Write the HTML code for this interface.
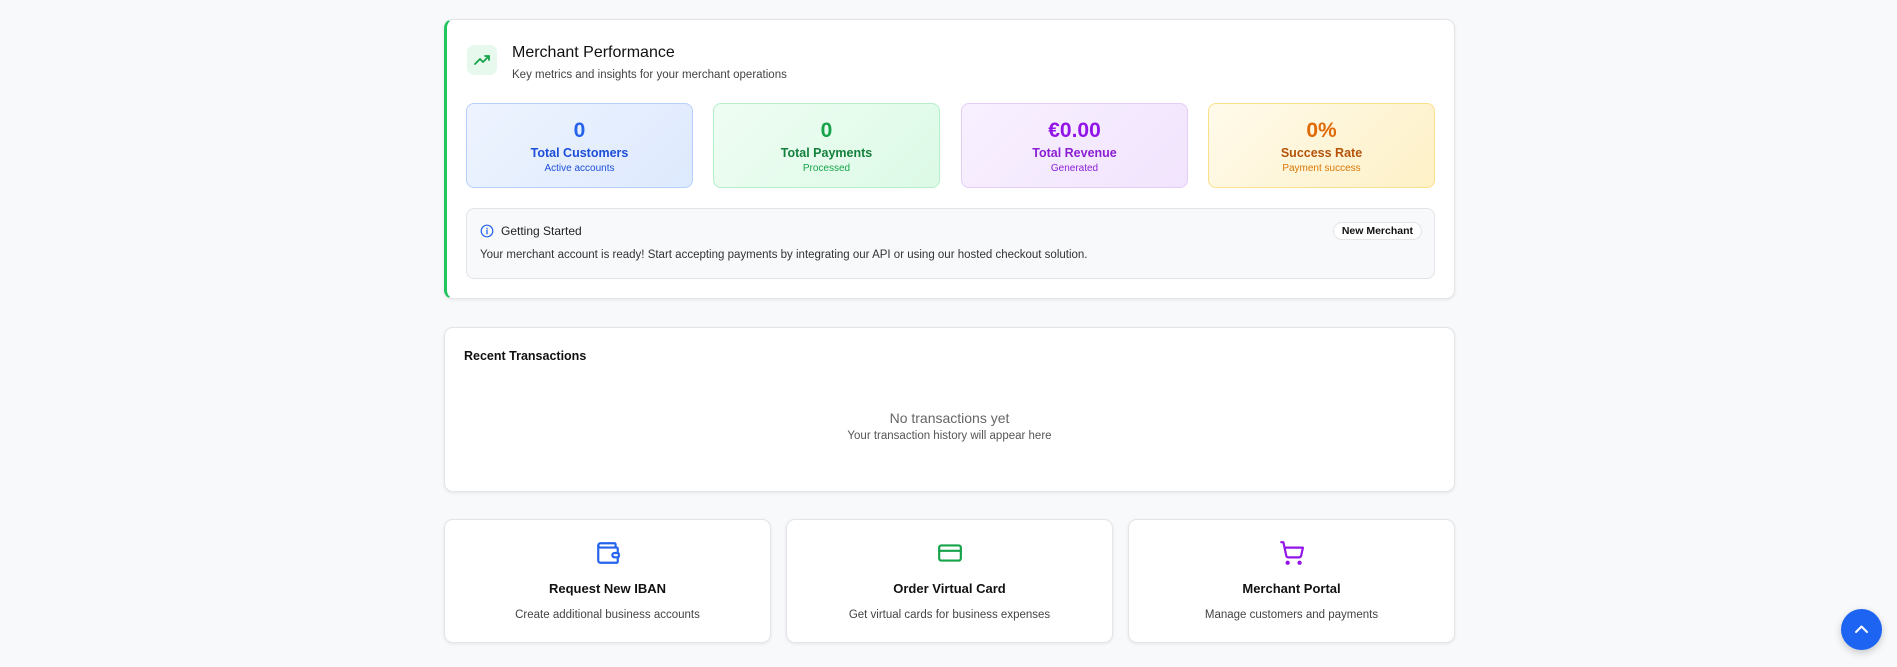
<!DOCTYPE html>
<html><head><style>
*{box-sizing:border-box;margin:0;padding:0}
body{width:1897px;height:667px;background:#f8f9fb;font-family:"Liberation Sans",sans-serif;position:relative;overflow:hidden;color:#111}
.card{position:absolute;background:#fff;border:1px solid #e3e5e8;border-radius:9px;box-shadow:0 1px 3px rgba(0,0,0,.08)}
.m{position:absolute;top:103px;width:227px;height:85px;border-radius:8px;text-align:center;border:1px solid}
.m .v{font-size:21px;font-weight:bold;margin-top:15px}
.m .l{font-size:12.5px;margin-top:3px;font-weight:600}
.m .s{font-size:10px;margin-top:3px}
.b{position:absolute;top:519px;width:327px;height:124px;text-align:center}
.b svg{margin-top:20px}
.b .t{font-size:13px;font-weight:bold;margin-top:10px;color:#111}
.b .d{font-size:11.5px;color:#444;margin-top:13px}
</style></head><body>
<div class="card" style="left:444px;top:19px;width:1011px;height:280px;border-left:3px solid #22c55e">
 <div style="position:absolute;left:20px;top:25px;width:30px;height:30px;border-radius:7px;background:#e6f9ec">
  <svg width="30" height="30" viewBox="0 0 30 30"><path d="M8 19l5-5 3 3 6-6M18 11h4v4" fill="none" stroke="#16a34a" stroke-width="1.8" stroke-linecap="round" stroke-linejoin="round"/></svg></div>
 <div style="position:absolute;left:65px;top:24px;font-size:16px">Merchant Performance</div>
 <div style="position:absolute;left:65px;top:49px;font-size:11.5px;color:#444">Key metrics and insights for your merchant operations</div>
</div>
<div class="m" style="left:466px;background:linear-gradient(135deg,#eef4ff,#dde9fd);border-color:#b8cffa;color:#1d4ed8"><div class="v" style="color:#2563eb">0</div><div class="l">Total Customers</div><div class="s">Active accounts</div></div>
<div class="m" style="left:713px;background:linear-gradient(135deg,#effdf3,#dcfae6);border-color:#b6efc8;color:#15803d"><div class="v" style="color:#16a34a">0</div><div class="l">Total Payments</div><div class="s" style="color:#16a34a">Processed</div></div>
<div class="m" style="left:961px;background:linear-gradient(135deg,#f8f0ff,#f1e4fd);border-color:#e6cdf7;color:#8b1fd4"><div class="v" style="color:#9314e8">€0.00</div><div class="l">Total Revenue</div><div class="s">Generated</div></div>
<div class="m" style="left:1208px;background:linear-gradient(135deg,#fffaeb,#fef1c7);border-color:#fbe08a;color:#b45309"><div class="v" style="color:#e06a08">0%</div><div class="l">Success Rate</div><div class="s" style="color:#d97706">Payment success</div></div>
<div style="position:absolute;left:466px;top:208px;width:969px;height:71px;border:1px solid #e3e5e8;border-radius:8px;background:#f8f9fb">
 <svg style="position:absolute;left:13px;top:15px" width="14" height="14" viewBox="0 0 14 14"><circle cx="7" cy="7" r="5.8" fill="none" stroke="#2563eb" stroke-width="1.2"/><path d="M7 6.3v3.5M7 4.3v.3" stroke="#2563eb" stroke-width="1.3" stroke-linecap="round"/></svg>
 <div style="position:absolute;left:34px;top:15px;font-size:12px;color:#222">Getting Started</div>
 <div style="position:absolute;right:12px;top:13px;font-size:10.5px;font-weight:bold;padding:2px 8px;border:1px solid #e3e5e8;border-radius:10px;background:#fff">New Merchant</div>
 <div style="position:absolute;left:13px;top:40px;font-size:11.5px;color:#333">Your merchant account is ready! Start accepting payments by integrating our API or using our hosted checkout solution.</div>
</div>
<div class="card" style="left:444px;top:327px;width:1011px;height:165px">
 <div style="position:absolute;left:19px;top:21px;font-size:12.5px;font-weight:bold">Recent Transactions</div>
 <div style="position:absolute;left:0;right:0;top:82px;text-align:center;font-size:14px;color:#666">No transactions yet</div>
 <div style="position:absolute;left:0;right:0;top:102px;text-align:center;font-size:11.5px;color:#555">Your transaction history will appear here</div>
</div>
<div class="card b" style="left:444px"><svg width="26" height="26" viewBox="0 0 24 24" fill="none" stroke="#2563eb" stroke-width="2" stroke-linecap="round" stroke-linejoin="round"><path d="M19 7V4a1 1 0 0 0-1-1H5a2 2 0 0 0 0 4h15a1 1 0 0 1 1 1v4h-3a2 2 0 0 0 0 4h3a1 1 0 0 0 1-1v-2a1 1 0 0 0-1-1"/><path d="M3 5v14a2 2 0 0 0 2 2h15a1 1 0 0 0 1-1v-4"/></svg><div class="t">Request New IBAN</div><div class="d">Create additional business accounts</div></div>
<div class="card b" style="left:786px"><svg width="26" height="26" viewBox="0 0 24 24" fill="none" stroke="#16a34a" stroke-width="2" stroke-linecap="round"><rect x="2" y="5" width="20" height="14" rx="2"/><path d="M2 10h20"/></svg><div class="t">Order Virtual Card</div><div class="d">Get virtual cards for business expenses</div></div>
<div class="card b" style="left:1128px"><svg width="26" height="26" viewBox="0 0 24 24" fill="none" stroke="#9314e8" stroke-width="2" stroke-linecap="round" stroke-linejoin="round"><circle cx="8" cy="21" r="1"/><circle cx="19" cy="21" r="1"/><path d="M2.05 2.05h2l2.66 12.420a2 2 0 0 0 2 1.58h9.78a2 2 0 0 0 1.95-1.57l1.65-7.43H5.12"/></svg><div class="t">Merchant Portal</div><div class="d">Manage customers and payments</div></div>
<div style="position:absolute;left:1841px;top:609px;width:41px;height:41px;border-radius:50%;background:#1d64f2;box-shadow:0 3px 8px rgba(0,0,0,.2)"><svg width="41" height="41" viewBox="0 0 41 41"><path d="M15 23l5.5-5.5L26 23" fill="none" stroke="#fff" stroke-width="2" stroke-linecap="round" stroke-linejoin="round"/></svg></div>
</body></html>
